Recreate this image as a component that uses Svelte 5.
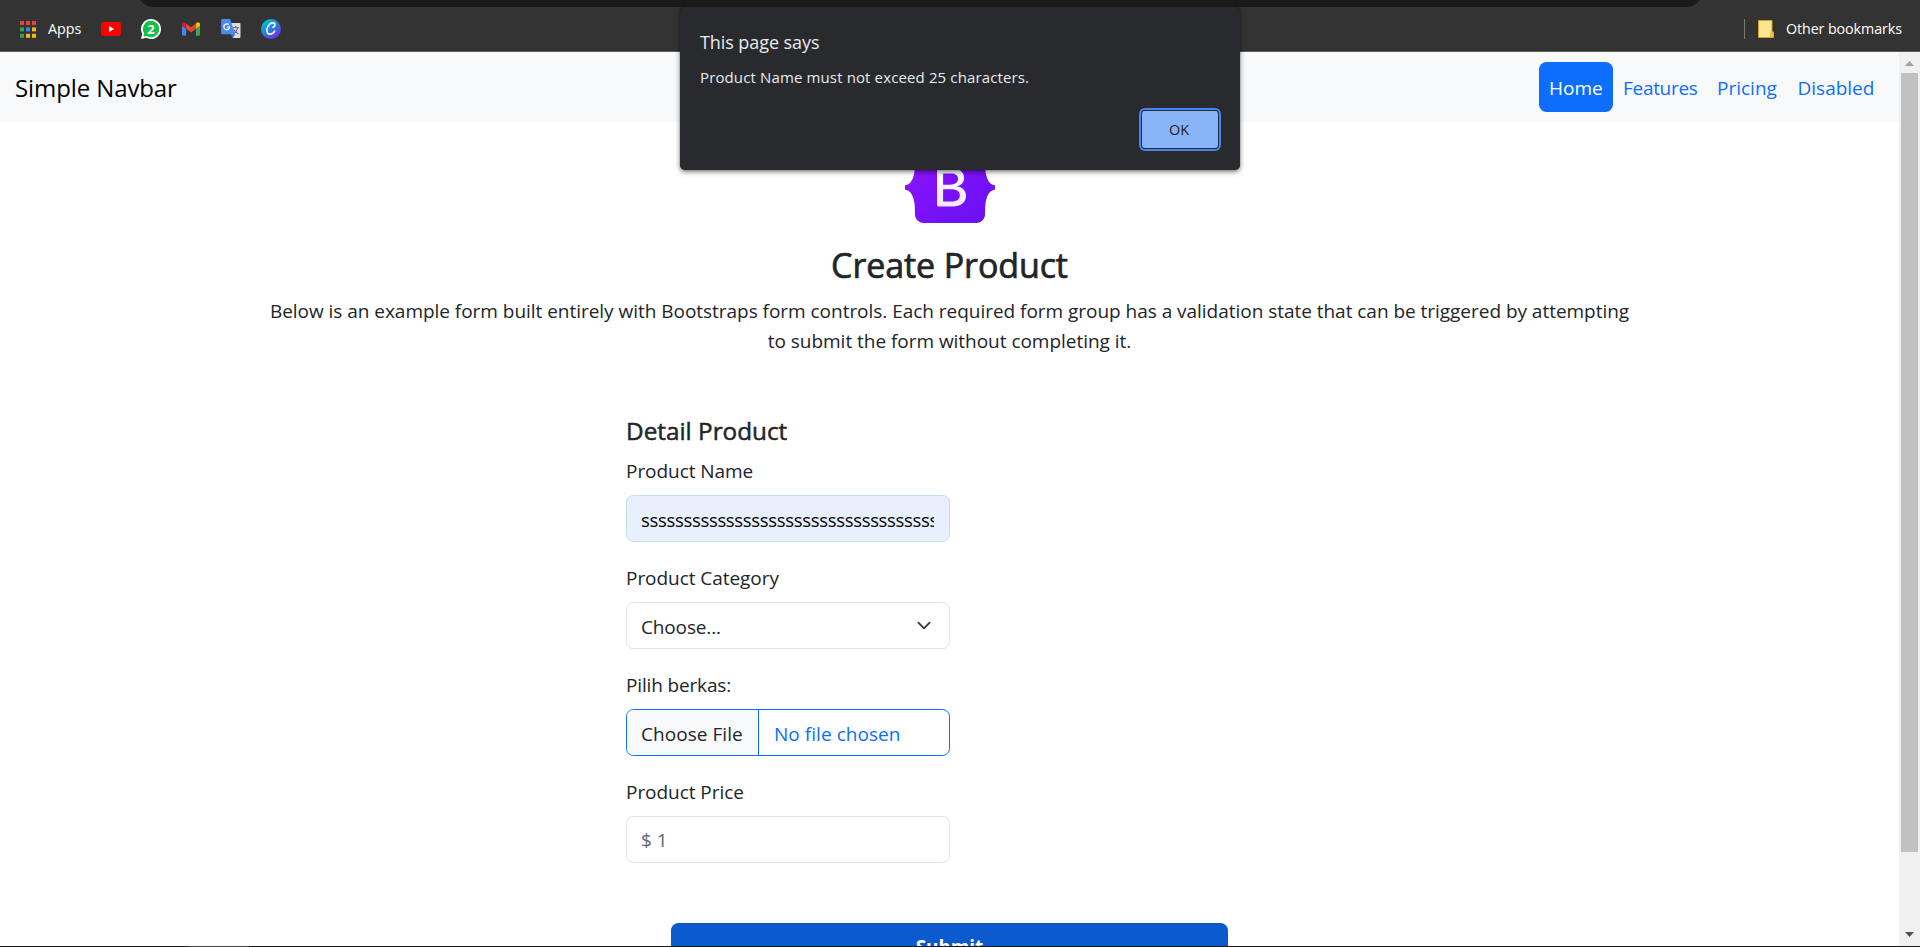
<script>
  const appDots = ['#ea4335', '#ea4335', '#ea4335', '#34a058', '#2b8cf0', '#fbb316', '#34a058', '#fbb316', '#fbb316'];
  const links = [
    { label: 'Home', kind: 'home' },
    { label: 'Features', kind: 'features' },
    { label: 'Pricing', kind: 'pricing' },
    { label: 'Disabled', kind: 'last' }
  ];
  let productName = 's'.repeat(35);
</script>

<div class="screen">
  <header class="browser">
    <div class="omnibox"></div>
    <div class="bookmarks">
      <svg class="apps" width="16" height="17" viewBox="0 0 16 17">
        {#each appDots as color, i}
          <rect x={(i % 3) * 6} y={Math.floor(i / 3) * 6.4} width="4" height="4" fill={color} />
        {/each}
      </svg>
      <span class="apps-label">Apps</span>

      <svg class="youtube" width="20" height="14" viewBox="0 0 20 14">
        <rect width="20" height="14" rx="3" fill="#f00" />
        <path d="M8 4v6l5.2-3z" fill="#fff" />
      </svg>

      <svg class="site" width="20" height="20" viewBox="0 0 20 20">
        <path d="M10 0a10 10 0 1 1-4.7 18.8L0 20l1.2-5.2A10 10 0 0 1 10 0z" fill="#fff" />
        <path d="M10 1.8a8.2 8.2 0 1 1-4.3 15.2L2.4 17.8l.8-3.3A8.2 8.2 0 0 1 10 1.8z" fill="#12c245" />
        <text x="10" y="14.8" text-anchor="middle" class="badge">2</text>
      </svg>

      <svg class="gmail" width="18" height="14" viewBox="52 42 88 66">
        <path fill="#4285f4" d="M58 108h14V74L52 59v43c0 3.320 2.690 6 6 6" />
        <path fill="#34a853" d="M120 108h14c3.320 0 6-2.690 6-6V59l-20 15" />
        <path fill="#fbbc04" d="M120 48v26l20-15v-8c0-7.420-8.470-11.650-14.400-7.200" />
        <path fill="#ea4335" d="M72 74V48l24 18 24-18v26L96 92" />
        <path fill="#c5221f" d="M52 51v8l20 15V48l-5.600-4.200c-5.940-4.450-14.400-.22-14.400 7.200" />
      </svg>

      <svg class="translate" width="20" height="20" viewBox="0 0 20 20">
        <path d="M8 4h10.500a1 1 0 0 1 1 1v13a1 1 0 0 1-1 1H12z" fill="#dcdcdc" />
        <path d="M11.500 8.500h6.500M14.700 7v1.500M17 8.500c-.8 3-2.800 5-5 6.500M12.500 10c.8 2 2.500 3.800 5 5" fill="none" stroke="#6b7377" stroke-width="1.100" />
        <path d="M9.500 15.200h4.800L11.600 19z" fill="#3367d6" />
        <path d="M1.200 0h7.900l5.200 15.200H1.200a1 1 0 0 1-1-1V1a1 1 0 0 1 1-1z" fill="#4c8bf5" />
        <path d="M7.800 5.700A2.900 2.900 0 1 0 8.600 8H6" fill="none" stroke="#fff" stroke-width="1.200" />
      </svg>

      <svg class="site" width="20" height="20" viewBox="0 0 20 20">
        <defs>
          <linearGradient id="canva" x1=".1" y1=".1" x2=".75" y2=".95">
            <stop offset="0" stop-color="#00c4cc" />
            <stop offset=".5" stop-color="#2383dc" />
            <stop offset="1" stop-color="#7d2ae8" />
          </linearGradient>
        </defs>
        <circle cx="10" cy="10" r="10" fill="url(#canva)" />
        <path d="M12 8.300c1.700-.7 2.300-2.600 1.600-3.700-.9-1.300-3.500-1-5.400 1.100-2.200 2.400-3 6-1.600 8.200 1.500 2.200 5 1.400 7-1.700" fill="none" stroke="#fff" stroke-width="1.700" stroke-linecap="round" />
      </svg>

      <span class="divider"></span>
      <svg class="folder" width="16" height="18" viewBox="0 0 16 18">
        <path d="M.500.500h13.500v11.500h1.500v5.500H.500z" fill="#ffe592" stroke="#c9a227" />
        <path d="M12.500 17v-3.800l1.500-1.200h1v5z" fill="#f2cf55" stroke="#d9b233" stroke-width=".8" />
      </svg>
      <span class="other">Other bookmarks</span>
    </div>
  </header>

  <div class="viewport">
    <div class="page">
      <nav class="navbar">
        <span class="brand">Simple Navbar</span>
        <ul class="links">
          {#each links as link}
            <li class="link {link.kind}">{link.label}</li>
          {/each}
        </ul>
      </nav>

      <main>
        <svg class="logo" width="90" height="71" viewBox="0 0 118 94" preserveAspectRatio="none">
          <defs>
            <linearGradient id="shield" x1="0" y1="0" x2="1" y2="1">
              <stop offset="0" stop-color="#9013fe" />
              <stop offset="1" stop-color="#6610f2" />
            </linearGradient>
            <linearGradient id="letter" x1="0" y1="0" x2="0" y2="1">
              <stop offset="0" stop-color="#fff" />
              <stop offset="1" stop-color="#f1e5fc" />
            </linearGradient>
          </defs>
          <path fill="url(#shield)" d="M24.509 0c-6.733 0-11.715 5.893-11.492 12.284.214 6.140-.064 14.092-2.066 20.577C8.943 39.365 5.547 43.485 0 44.014v5.972c5.547.529 8.943 4.649 10.951 11.153 2.002 6.485 2.280 14.437 2.066 20.577C12.794 88.106 17.776 94 24.510 94H93.500c6.733 0 11.714-5.893 11.491-12.284-.214-6.140.064-14.092 2.066-20.577 2.009-6.504 5.396-10.624 10.943-11.153v-5.972c-5.547-.529-8.934-4.649-10.943-11.153-2.002-6.484-2.280-14.437-2.066-20.577C105.214 5.894 100.233 0 93.500 0z" />
          <path fill="url(#letter)" fill-rule="evenodd" d="M80 57.863C80 66.663 73.436 72 62.543 72H44a2 2 0 0 1-2-2V24a2 2 0 0 1 2-2h18.437c9.083 0 15.044 4.920 15.044 12.474 0 5.302-4.010 10.049-9.119 10.880v.277C75.317 46.394 80 51.210 80 57.863zM60.521 28.340H49.948v14.934h8.905c6.884 0 10.680-2.772 10.680-7.727 0-4.643-3.264-7.207-9.012-7.207zM49.948 49.200v16.458H60.910c7.167 0 10.964-2.876 10.964-8.281 0-5.406-3.903-8.178-11.425-8.178z" />
        </svg>
        <h2>Create Product</h2>
        <p class="lead">
          Below is an example form built entirely with Bootstraps form controls. Each required form group has a validation state that can be triggered by attempting<br />to submit the form without completing it.
        </p>

        <form>
          <div class="fields">
            <h4>Detail Product</h4>
            <div class="group">
              <div class="label">Product Name</div>
              <div class="control filled"><span class="value">{productName}</span></div>
            </div>
            <div class="group">
              <div class="label">Product Category</div>
              <div class="control select">
                <span>Choose...</span>
                <svg width="20" height="15" viewBox="0 0 16 16" preserveAspectRatio="xMidYMid meet">
                  <path fill="none" stroke="#343a40" stroke-linecap="round" stroke-linejoin="round" stroke-width="2" d="m2 5 6 6 6-6" />
                </svg>
              </div>
            </div>
            <div class="group">
              <div class="label tight">Pilih berkas:</div>
              <div class="control file">
                <span class="choose">Choose File</span>
                <span class="chosen">No file chosen</span>
              </div>
            </div>
            <div class="group">
              <div class="label">Product Price</div>
              <div class="control placeholder">$ 1</div>
            </div>
          </div>
          <button type="button" class="submit">Submit</button>
        </form>
      </main>
    </div>

    <div class="scrollbar">
      <svg width="9" height="5" viewBox="0 0 9 5"><path d="M0 5 4.500 0 9 5z" fill="#a3a3a3" /></svg>
      <div class="thumb"></div>
      <svg class="down" width="9" height="5" viewBox="0 0 9 5"><path d="M0 0h9L4.500 5z" fill="#505050" /></svg>
    </div>
  </div>
  <div class="taskbar"><span></span></div>

  <div class="dialog" role="alertdialog">
    <div class="title">This page says</div>
    <div class="message">Product Name must not exceed 25 characters.</div>
    <button type="button" class="ok">OK</button>
  </div>
</div>

<style>
  :global(body) { margin: 0; overflow: hidden; }
  * { box-sizing: border-box; }
  .screen {
    position: relative;
    display: flex;
    flex-direction: column;
    width: 1920px;
    height: 947px;
    overflow: hidden;
    background: #fff;
    color: #212529;
    font: 19px/30px "Open Sans", "Noto Sans", sans-serif;
  }
  svg { display: block; flex: none; }

  .browser {
    flex: none;
    height: 52px;
    overflow: hidden;
    display: flex;
    flex-direction: column;
    background: #333;
    border-bottom: 1px solid #5c5c5c;
  }
  .omnibox {
    flex: none;
    width: 1566px;
    height: 34px;
    margin: -27px 0 0 137px;
    border-radius: 17px;
    background: #1a1a1a;
  }
  .bookmarks {
    flex: none;
    display: flex;
    align-items: center;
    height: 44px;
    padding: 0 18px 0 20px;
    color: #fff;
    font-size: 14.3px;
    line-height: 20px;
  }
  .apps-label { width: 53px; margin-left: 12px; margin-top: -1px; }
  .youtube { margin-right: 20px; }
  .site { margin-right: 21px; }
  .badge { fill: #fff; font: 700 13px "Open Sans", sans-serif; }
  .gmail { margin-right: 21px; }
  .translate { margin-right: 20px; }
  .divider { width: 1px; height: 20px; margin-left: auto; background: #777; }
  .folder { margin: 0 12px 0 13px; }
  .other { width: 116px; margin-top: -1px; white-space: nowrap; letter-spacing: -0.1px; }

  .viewport { flex: none; display: flex; height: 894px; overflow: hidden; }
  .page { width: 1899px; }
  .navbar {
    display: flex;
    align-items: center;
    justify-content: space-between;
    height: 70px;
    padding: 0 15px;
    background: #f8f9fa;
  }
  .brand { padding-top: 2px; color: #000; font-size: 24px; letter-spacing: -0.1px; }
  .links { display: flex; margin: 0; padding: 0; list-style: none; }
  .link { height: 50px; padding: 11px 0 9px 10px; color: #0d6efd; white-space: nowrap; }
  .home { width: 74px; border-radius: 7.5px; background: #0d6efd; color: #fff; }
  .features { width: 94px; letter-spacing: -0.3px; }
  .pricing { width: 80.500px; }
  .last { width: 96.500px; }

  main { display: flex; flex-direction: column; align-items: center; padding-top: 30px; }
  h2 {
    margin: 19px 0 0;
    font-size: 34px;
    line-height: 46px;
    font-weight: 400;
    letter-spacing: -0.1px;
    -webkit-text-stroke: 0.7px #212529;
  }
  .lead { margin: 8px 0 0; text-align: center; white-space: nowrap; letter-spacing: -0.03px; }
  form { display: flex; flex-direction: column; align-items: center; width: 647px; margin-top: 60px; }
  .fields { align-self: flex-start; display: flex; flex-direction: column; gap: 20px; width: 324px; }
  h4 {
    margin: 0 0 -10px;
    font-size: 24.300px;
    line-height: 30px;
    font-weight: 400;
    -webkit-text-stroke: 0.5px #212529;
  }
  .label { margin-bottom: 9px; letter-spacing: -0.05px; }
  .group { height: 87px; }
  .tight { letter-spacing: -0.15px; }
  .control {
    height: 47px;
    margin-top: 9px;
    padding: 9px 14px 6px;
    border: 1px solid #dee2e6;
    border-radius: 7.500px;
    white-space: nowrap;
  }
  .filled { padding-right: 15px; background: #e8f0fe; border-color: #c8daf3; color: #000; }
  .value { display: block; overflow: hidden; font-size: 18.500px; letter-spacing: -0.33px; }
  .select { display: flex; justify-content: space-between; letter-spacing: -0.15px; }
  .select svg { margin: 6px 1px 0 0; }
  .file { display: flex; padding: 0; overflow: hidden; border-color: #0d6efd; color: #0d6efd; }
  .choose {
    width: 132px;
    padding: 9px 0 6px 14px;
    border-right: 1px solid #0d6efd;
    background: #f8f9fa;
    color: #212529;
    letter-spacing: 0.05px;
  }
  .chosen { padding: 9px 0 6px 15px; letter-spacing: 0.05px; }
  .placeholder { padding-top: 8px; color: #63686d; }
  .submit {
    width: 557px;
    height: 48px;
    margin-top: 59px;
    padding: 0;
    border: 0;
    border-radius: 7.500px;
    background: #0b5ace;
    color: #fff;
    font: 700 19px/48px "Open Sans", "Noto Sans", sans-serif;
  }

  .scrollbar {
    display: flex;
    flex-direction: column;
    align-items: center;
    width: 21px;
    padding: 9px 1px 9px 0;
    background: #f0f0f0;
  }
  .thumb { flex: none; width: 17px; height: 779px; margin-top: 7px; background: #c1c1c1; }
  .down { margin-top: auto; }
  .taskbar { display: flex; height: 1px; padding-left: 188px; background: #1a1a1a; }
  .taskbar span { width: 61px; background: #484848; }

  .dialog {
    position: absolute;
    left: 680px;
    top: 7px;
    display: flex;
    flex-direction: column;
    width: 560px;
    height: 163px;
    padding: 20px 22px 0 20px;
    border-radius: 5px;
    background: #292a2d;
    box-shadow: 0 2px 5px rgba(0, 0, 0, 0.5), 0 0 1px rgba(0, 0, 0, 0.6);
    color: #e8eaed;
  }
  .title { font-size: 18px; letter-spacing: -0.08px; }
  .message { margin-top: 8px; font-size: 15px; line-height: 24px; letter-spacing: 0.13px; }
  .ok {
    align-self: flex-end;
    width: 76px;
    height: 37px;
    margin-top: 22px;
    padding: 0 2px 0 0;
    border: 0;
    border-radius: 3px;
    background: #8ab4f8;
    box-shadow: 0 0 0 1px #292a2d, 0 0 0 3px #4285f4;
    color: #202124;
    font: 14.500px/35px "Open Sans", "Noto Sans", sans-serif;
  }
</style>
